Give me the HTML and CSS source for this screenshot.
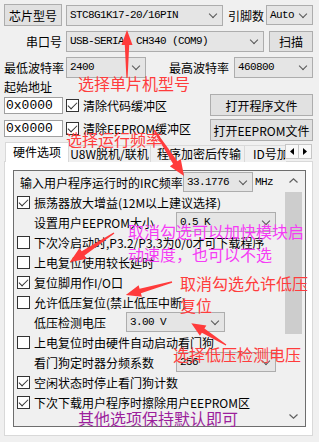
FILE: index.html
```html
<!DOCTYPE html>
<html lang="zh-CN">

    <head>
        <meta charset="UTF-8">
        <meta name="viewport" content="width=device-width, initial-scale=1.0">
        <title>STC-ISP</title>
        <link rel="stylesheet" href="styles.css">
    </head>

    <body>
        <div class="top">
            <div class="row r1">
                <button class="btn chip-btn">芯片型号</button>
                <div class="combo chip">STC8G1K17-20/16PIN</div>
                <span class="pins">引脚数</span>
                <div class="combo auto">Auto</div>
            </div>
            <div class="row r2">
                <span class="lbl right">串口号</span>
                <div class="combo port">USB-SERIAL CH340 (COM9)</div>
                <button class="btn scan">扫描</button>
            </div>
            <div class="row r3">
                <span class="lbl">最低波特率</span>
                <div class="combo baud-lo">2400</div>
                <span class="lbl hi">最高波特率</span>
                <div class="combo baud-hi">460800</div>
            </div>
            <div class="start">起始地址</div>
            <div class="row r5">
                <div class="addr">0x0000</div>
                <span class="cb on"></span><span class="cb-text">清除代码缓冲区</span>
                <button class="btn open">打开程序文件</button>
            </div>
            <div class="row r6">
                <div class="addr">0x0000</div>
                <span class="cb on"></span><span class="cb-text">清除EEPROM缓冲区</span>
                <button class="btn open">打开EEPROM文件</button>
            </div>

            <div class="tabctl">
                <div class="tabstrip">
                    <div class="tabs">
                        <div class="tab sel t1">硬件选项</div>
                        <div class="tab t2">U8W脱机/联机</div>
                        <div class="tab t3">程序加密后传输</div>
                        <div class="tab t4">ID号加密</div>
                    </div>
                    <div class="spin">
                        <span class="spin-btn"><svg width="4" height="7" viewBox="0 0 4 7"><polygon points="4,0 0,3.5 4,7" /></svg></span>
                        <span class="spin-btn"><svg width="4" height="7" viewBox="0 0 4 7"><polygon points="0,0 4,3.5 0,7" /></svg></span>
                    </div>
                </div>
                <div class="panel">
                    <div class="box">
                        <div class="opts">
                            <div class="opt">
                                <span class="irc-lbl">输入用户程序运行时的IRC频率</span>
                                <div class="combo irc">33.1776</div>
                                <span class="unit">MHz</span>
                            </div>
                            <div class="opt"><span class="cb on"></span>振荡器放大增益(12M以上建议选择)</div>
                            <div class="opt">
                                <span class="sub-lbl w142">设置用户EEPROM大小</span>
                                <div class="combo sub">0.5 K</div>
                            </div>
                            <div class="opt"><span class="cb"></span>下次冷启动时,P3.2/P3.3为0/0才可下载程序</div>
                            <div class="opt"><span class="cb"></span>上电复位使用较长延时</div>
                            <div class="opt"><span class="cb on"></span>复位脚用作I/O口</div>
                            <div class="opt"><span class="cb"></span>允许低压复位(禁止低压中断)</div>
                            <div class="opt">
                                <span class="sub-lbl w92">低压检测电压</span>
                                <div class="combo volt">3.00 V</div>
                            </div>
                            <div class="opt"><span class="cb"></span>上电复位时由硬件自动启动看门狗</div>
                            <div class="opt">
                                <span class="sub-lbl w142">看门狗定时器分频系数</span>
                                <div class="combo sub">256</div>
                            </div>
                            <div class="opt"><span class="cb on"></span>空闲状态时停止看门狗计数</div>
                            <div class="opt"><span class="cb on"></span>下次下载用户程序时擦除用户EEPROM区</div>
                        </div>
                        <div class="sbar">
                            <div class="sb-btn"><svg width="9" height="5" viewBox="0 0 9 5"><polyline points="0.5,4.5 4.5,0.8 8.5,4.5" /></svg></div>
                            <div class="thumb"></div>
                            <div class="sb-btn down"><svg width="9" height="5" viewBox="0 0 9 5"><polyline points="0.5,0.5 4.5,4.2 8.5,0.5" /></svg></div>
                        </div>
                    </div>
                </div>
            </div>
        </div>

        <!-- annotations drawn over the dialog -->
        <svg class="arrows" width="319" height="442" viewBox="0 0 319 442">
            <polygon transform="translate(127 78) rotate(-90)" points="0,-0.6 33,-2.2 33,-5.5 48,0 33,5.5 33,2.2 0,0.6" />
            <polygon transform="translate(154 130) rotate(56.9)" points="0,-0.7 39,-2.6 39,-6.5 55,0 39,6.5 39,2.6 0,0.7" />
            <polygon transform="translate(114 233) rotate(146.6)" points="0,-0.7 37,-2.6 37,-6.5 53,0 37,6.5 37,2.6 0,0.7" />
            <polygon transform="translate(172 282) rotate(164.2)" points="0,-0.7 33,-2.4 33,-6 48,0 33,6 33,2.4 0,0.7" />
            <polygon transform="translate(226 345) rotate(212.2)" points="0,-0.7 27,-2.4 27,-6 41,0 27,6 27,2.4 0,0.7" />
        </svg>
        <span class="note n-chip">选择单片机型号</span>
        <span class="note n-freq">选择运行频率</span>
        <span class="note pink n-cold">取消勾选可以加快模块启<br>动速度，也可以不选</span>
        <span class="note n-lvr">取消勾选允许低压<br>复位</span>
        <span class="note n-volt">选择低压检测电压</span>
        <span class="note purple n-rest">其他选项保持默认即可</span>
    </body>

</html>
```

FILE: styles.css
```css
* {
    box-sizing: border-box;
}

body {
    margin: 0;
    width: 319px;
    height: 442px;
    overflow: hidden;
    position: relative;
    background: #f0f0f0;
    font-family: "Noto Sans CJK SC", sans-serif;
    font-size: 12px;
    color: #000;
}

.top {
    padding: 4px 6px 0 4px;
}

.row {
    display: flex;
    align-items: center;
}

.r1 {
    height: 22px;
}

.r2 {
    height: 21px;
    margin-top: 5px;
}

.r3 {
    height: 22px;
    margin-top: 4px;
}

.r5 {
    height: 22px;
}

.r6 {
    height: 22px;
    margin-top: 3px;
}

.r6 .addr,
.r6 .cb,
.r6 .cb-text {
    margin-bottom: 3px;
}

.btn {
    height: 22px;
    padding: 0;
    border: 1px solid #adadad;
    background: #e1e1e1;
    font: inherit;
    color: #000;
}

.chip-btn {
    width: 58px;
}

.scan {
    width: 44px;
    height: 21px;
    margin-left: 5px;
}

.open {
    width: 103px;
    margin-left: auto;
}

.combo {
    position: relative;
    height: 21px;
    padding-left: 3px;
    border: 1px solid #adadad;
    background: #e5e5e5;
    font-family: "Liberation Mono", monospace;
    font-size: 11px;
    letter-spacing: -0.6px;
    line-height: 19px;
    white-space: nowrap;
    overflow: hidden;
}

.combo::after {
    content: "";
    position: absolute;
    right: 6px;
    top: 5px;
    width: 5px;
    height: 5px;
    border: solid #555;
    border-width: 0 1px 1px 0;
    transform: rotate(45deg);
}

.chip {
    width: 157px;
    margin-left: 4px;
}

.pins {
    width: 36px;
    margin-left: 5px;
}

.auto {
    width: 47px;
    height: 20px;
    margin-left: 2px;
}

.lbl {
    width: 60px;
}

.lbl.right {
    width: 58px;
    text-align: right;
}

.port {
    width: 198px;
    margin-left: 4px;
}

.baud-lo {
    width: 80px;
    margin-left: 2px;
}

.lbl.hi {
    margin-left: 23px;
}

.baud-hi {
    width: 79px;
    margin-left: 5px;
}

.start {
    height: 14px;
    margin-top: 2px;
    line-height: 14px;
}

.addr {
    width: 59px;
    height: 17px;
    padding-left: 1px;
    border: 1px solid #a0a0a0;
    background: #fff;
    font-family: "Liberation Mono", monospace;
    font-size: 13px;
    line-height: 15px;
}

.cb {
    position: relative;
    flex: none;
    width: 13px;
    height: 13px;
    border: 1px solid #333;
    background: #fff;
}

.cb.on::after {
    content: "";
    position: absolute;
    left: 3px;
    top: 0;
    width: 4px;
    height: 8px;
    border: solid #333;
    border-width: 0 1.5px 1.5px 0;
    transform: rotate(45deg);
}

.r5 .cb,
.r6 .cb {
    margin-left: 3px;
}

.cb-text {
    margin-left: 4px;
}

.tabctl {
    width: 309px;
}

.tabstrip {
    display: flex;
    align-items: flex-end;
    height: 19px;
    margin-top: 1px;
}

.tabs {
    display: flex;
    align-items: flex-end;
    flex: 1;
    height: 20px;
    margin-bottom: -1px;
    padding-left: 1px;
    overflow: hidden;
}

.tab {
    flex: none;
    height: 17px;
    margin-left: -1px;
    border: 1px solid #d9d9d9;
    border-bottom: none;
    background: #f0f0f0;
    line-height: 15px;
    text-align: center;
    white-space: nowrap;
}

.tab:first-child {
    margin-left: 0;
}

.tab.sel {
    position: relative;
    z-index: 1;
    height: 20px;
    background: #fff;
    line-height: 18px;
}

.t1 {
    width: 64px;
}

.t2 {
    width: 83px;
}

.t3 {
    width: 95px;
    text-align: left;
    padding-left: 6px;
}

.t4 {
    width: 70px;
    text-align: left;
    padding-left: 8px;
}

.spin {
    display: flex;
    margin: 0 1px 2px 0;
}

.spin-btn {
    display: flex;
    align-items: center;
    justify-content: center;
    width: 14px;
    height: 15px;
    margin-left: -1px;
    border: 1px solid #c6c6c6;
    background: #f9f9f9;
}

.spin-btn svg {
    fill: #000;
}

.panel {
    height: 275px;
    padding: 8px 0 0 8px;
    border: 1px solid #d9d9d9;
    background: #fff;
}

.box {
    display: flex;
    width: 293px;
    height: 257px;
    border: 1px solid #6e6e6e;
    background: #f0f0f0;
}

.opts {
    flex: 1;
    padding-top: 1px;
}

.opt {
    display: flex;
    align-items: center;
    height: 20px;
    white-space: nowrap;
}

.opt .cb {
    margin: 0 4px 0 3px;
}

.irc-lbl {
    width: 163px;
    margin-left: 6px;
}

.irc {
    width: 70px;
    height: 20px;
}

.unit {
    margin-left: 2px;
    font-family: "Liberation Mono", monospace;
    font-size: 11px;
    letter-spacing: -0.6px;
}

.sub-lbl {
    margin-left: 20px;
}

.w142 {
    width: 142px;
}

.w92 {
    width: 92px;
}

.sub,
.volt {
    height: 20px;
}

.sub {
    width: 100px;
}

.volt {
    width: 99px;
}

.sbar {
    display: flex;
    flex-direction: column;
    width: 20px;
    padding-bottom: 1px;
}

.sb-btn {
    display: flex;
    align-items: center;
    justify-content: center;
    width: 17px;
    height: 18px;
}

.sb-btn svg {
    fill: none;
    stroke: #606060;
    stroke-width: 1.2;
}

.sb-btn.down {
    margin-top: auto;
}

.thumb {
    width: 17px;
    height: 142px;
    margin-top: 3px;
    background: #cdcdcd;
}

.arrows {
    position: absolute;
    left: 0;
    top: 0;
    fill: #ff3b3b;
}

.note {
    position: absolute;
    font-size: 16px;
    line-height: 16px;
    white-space: nowrap;
    color: #ff3c3c;
}

.pink {
    color: #f53cf5;
}

.purple {
    color: #9c1f9c;
}

.n-chip {
    left: 78px;
    top: 75px;
}

.n-freq {
    left: 66px;
    top: 131px;
}

.n-cold {
    left: 128px;
    top: 220px;
    line-height: 23px;
}

.n-lvr {
    left: 180px;
    top: 272px;
    line-height: 22px;
}

.n-volt {
    left: 173px;
    top: 346px;
}

.n-rest {
    left: 78px;
    top: 410px;
}
```
